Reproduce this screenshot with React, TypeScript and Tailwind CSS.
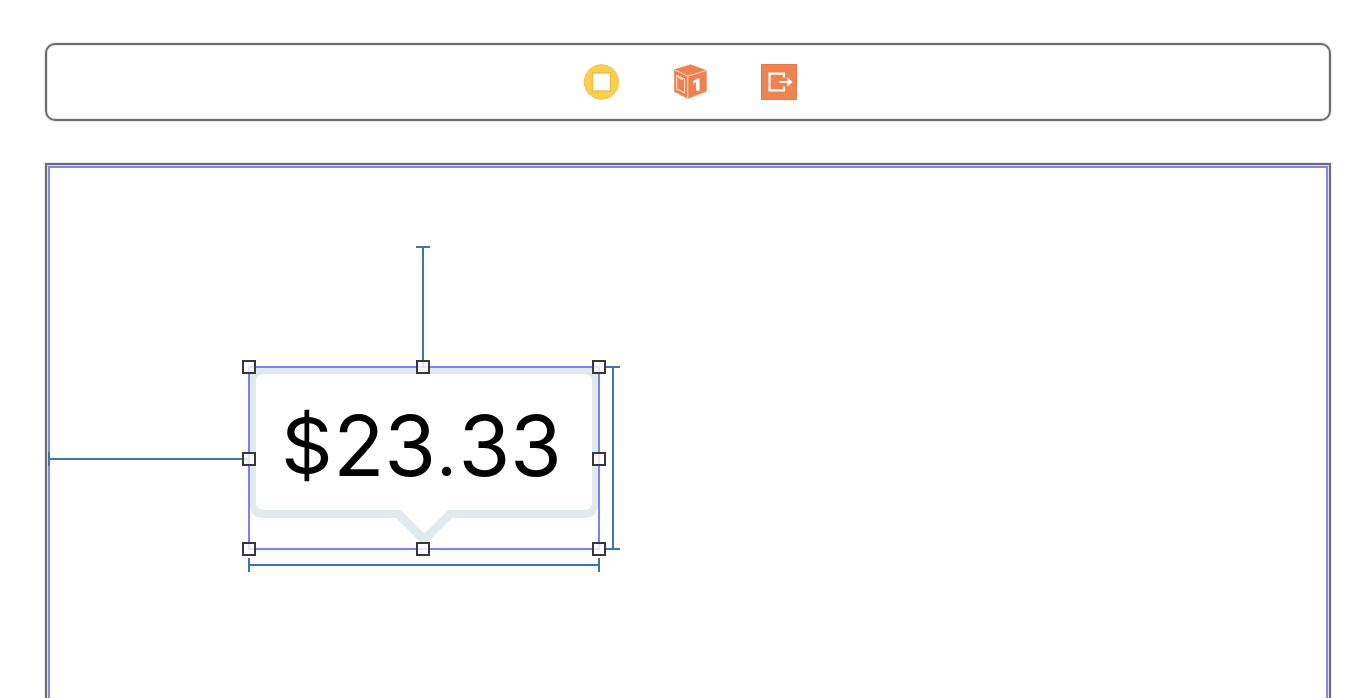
const handles = [
  'left-[192px] top-[192px]',
  'left-[366px] top-[192px]',
  'left-[542px] top-[192px]',
  'left-[192px] top-[284px]',
  'left-[542px] top-[284px]',
  'left-[192px] top-[374px]',
  'left-[366px] top-[374px]',
  'left-[542px] top-[374px]',
];

const constraints = [
  'left-[366px] top-[78px] h-[2px] w-[14px]',
  'left-[372px] top-[78px] h-[120px] w-[2px]',
  'left-[-2px] top-[284px] h-[14px] w-[2px]',
  'left-[-2px] top-[290px] h-[2px] w-[200px]',
  'left-[556px] top-[198px] h-[2px] w-[14px]',
  'left-[562px] top-[198px] h-[184px] w-[2px]',
  'left-[556px] top-[380px] h-[2px] w-[14px]',
  'left-[198px] top-[390px] h-[14px] w-[2px]',
  'left-[198px] top-[396px] h-[2px] w-[352px]',
  'left-[548px] top-[390px] h-[14px] w-[2px]',
];

function ControllerIcon() {
  return (
    <svg width="36" height="36" viewBox="-.5 0 36 36">
      <circle cx="18" cy="18" r="17.2" fill="#f8d04b" stroke="#eec448" />
      <rect x="9" y="9" width="18" height="18" fill="white" stroke="#e8b93f" strokeWidth="1.4" />
      <rect x="9.8" y="9.8" width="16.4" height="16.4" fill="none" stroke="#fae7ac" strokeWidth=".8" strokeDasharray="1.5 1.5" />
    </svg>
  );
}

function ResponderIcon() {
  return (
    <svg width="36" height="36" viewBox="-.3 0 36 36">
      <path d="M18.4.8 34 6.5v20.8L15.5 34.4 2.1 27.5V5.6Z" fill="#ee814f" stroke="#e8865a" strokeWidth=".7" />
      <path d="M2.6 6.1 15.4 12 33.6 6.8M15.4 12v22" fill="none" stroke="#fbd9c8" strokeWidth="1.1" />
      <path d="M4.4 11.5 12.2 15v13.8L4.4 24.9ZM5.8 13.6l4.8 2.2" fill="none" stroke="#fce0d2" strokeWidth="1.1" />
      <path d="M21 17.1 25.2 14.4h2v12.3h-3.4v-8.6L21 19.7Z" fill="white" />
    </svg>
  );
}

function ExitIcon() {
  return (
    <svg width="36" height="36" viewBox="0 0 36 36">
      <rect x=".5" y=".5" width="35" height="35" fill="#ee8250" stroke="#e37b4b" />
      <path d="M23 13.5V9.6H8.6v16.8H23v-3.9M18.6 18h10" fill="none" stroke="white" strokeWidth="2.2" />
      <path d="m26.4 13.2 5.2 4.8-5.2 4.8Z" fill="white" />
    </svg>
  );
}

function PriceBubble() {
  return (
    <div className="absolute left-[198px] top-[198px] flex h-[184px] w-[352px] border-2 border-[#7c80f8]">
      <svg className="absolute -left-[2px] -top-[2px]" width="352" height="184" viewBox="0 0 352 184">
        <path
          fillRule="evenodd"
          fill="#e0eaec"
          d="M2 2H350V138Q350 152 336 152H204.5L178 178Q176 179 174 178L148 152H16Q2 152 2 138ZM16 8Q8 8 8 16V136Q8 144 16 144H153L176 167.5 200 144H336Q344 144 344 136V16Q344 8 336 8Z"
        />
      </svg>
      <div className="relative ml-[29.5px] mt-[26px] whitespace-nowrap font-['Inter',sans-serif] text-[84px] leading-[104px] tracking-[-0.2px] text-black">
        <span className="inline-block origin-[50%_47%] scale-x-[0.96] scale-y-[0.9]">$</span>23
        <span className="ml-[0.5px] mr-[2px] text-[70px]">.</span>33
      </div>
      <div className="absolute -inset-[2px] border-2 border-[#7c80f8]" />
    </div>
  );
}

export default function App() {
  return (
    <main className="flex h-[698px] w-[1370px] flex-col overflow-hidden bg-white pl-[45px] pt-[43px]">
      <header className="flex h-[78px] w-[1286px] shrink-0 items-center justify-center gap-[53px] rounded-[10px] border-2 border-[#6c6c6c] pl-[3px] shadow-[0_0_0_1px_#ececec,inset_0_0_0_1px_#e8e8e8]">
        <ControllerIcon />
        <ResponderIcon />
        <ExitIcon />
      </header>
      <section className="mt-[42px] h-[700px] w-[1286px] shrink-0 border-2 border-[#6c6c6c] bg-[#dedede] p-px shadow-[0_0_0_1px_#ececec]">
        <div className="relative h-full border-2 border-[#8185fb] bg-white">
          <PriceBubble />
          {constraints.map((place) => (
            <div key={place} className={`absolute bg-[#3d75b3] ${place}`} />
          ))}
          {handles.map((place) => (
            <div key={place} className={`absolute size-[14px] border-2 border-[#383838] bg-white/80 ${place}`} />
          ))}
        </div>
      </section>
    </main>
  );
}
